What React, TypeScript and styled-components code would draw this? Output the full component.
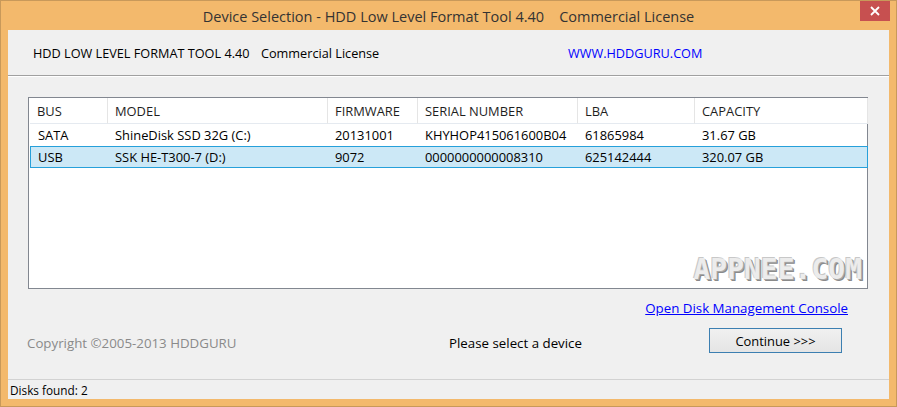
import styled, { createGlobalStyle } from "styled-components";

const GlobalStyle = createGlobalStyle`
  html, body {
    margin: 0;
    padding: 0;
    background: #f3b96c;
  }
  body {
    font-family: "Open Sans", "Noto Sans", "Liberation Sans", sans-serif;
    font-size: 12.7px;
    color: #000;
  }
`

const columns = [
  { title: "BUS", width: 78 },
  { title: "MODEL", width: 220 },
  { title: "FIRMWARE", width: 90 },
  { title: "SERIAL NUMBER", width: 160 },
  { title: "LBA", width: 117 },
  { title: "CAPACITY", width: 173 },
]

const disks = [
  ["SATA", "ShineDisk SSD 32G (C:)", "20131001", "KHYHOP415061600B04", "61865984", "31.67 GB"],
  ["USB", "SSK HE-T300-7 (D:)", "9072", "0000000000008310", "625142444", "320.07 GB"],
]

export default () => {
  return (
    <Window>
      <GlobalStyle />
      <TitleBar>
        <Caption>Device Selection - HDD Low Level Format Tool 4.40&nbsp;&nbsp;&nbsp;&nbsp;Commercial License</Caption>
        <CloseButton>
          <svg width="10" height="10" viewBox="0 0 10 10">
            <path d="M1 1 L9 9 M9 1 L1 9" stroke="#fff" strokeWidth="1.8" />
          </svg>
        </CloseButton>
      </TitleBar>
      <Client>
        <Header>
          <HeaderTitle>HDD LOW LEVEL FORMAT TOOL 4.40</HeaderTitle>
          <HeaderLicense>Commercial License</HeaderLicense>
          <SiteLink>WWW.HDDGURU.COM</SiteLink>
        </Header>
        <Body>
          <ListView>
            <Table>
              <colgroup>
                {columns.map((c) => (
                  <col key={c.title} style={{ width: c.width }} />
                ))}
              </colgroup>
              <thead>
                <tr>
                  {columns.map((c) => (
                    <HeadCell key={c.title}>{c.title}</HeadCell>
                  ))}
                </tr>
              </thead>
              <tbody>
                {disks.map((d, i) => (
                  <Row key={d[1]} selected={i === 1}>
                    {d.map((v, j) => (
                      <Cell key={j} selected={i === 1} first={j === 0} last={j === d.length - 1}>{v}</Cell>
                    ))}
                  </Row>
                ))}
              </tbody>
            </Table>
            <Watermark>APPNEE.COM</Watermark>
          </ListView>
          <LinkRow>
            <ConsoleLink href="#">Open Disk Management Console</ConsoleLink>
          </LinkRow>
          <Footer>
            <Copyright>Copyright ©2005-2013 HDDGURU</Copyright>
            <Hint>Please select a device</Hint>
            <ContinueButton>Continue &gt;&gt;&gt;</ContinueButton>
          </Footer>
        </Body>
        <StatusBar>Disks found: 2</StatusBar>
      </Client>
    </Window>
  )
}

const Window = styled.div`
  width: 897px;
  height: 407px;
  box-sizing: border-box;
  border: 1px solid #c8995a;
  background: #f3b96c;
  display: flex;
  flex-direction: column;
`

const TitleBar = styled.div`
  height: 29px;
  position: relative;
  display: flex;
  align-items: center;
  justify-content: center;
`

const Caption = styled.span`
  font-size: 14.5px;
  color: #333;
  margin-top: 1px;
`

const CloseButton = styled.div`
  position: absolute;
  top: 0;
  right: 6px;
  width: 30px;
  height: 20px;
  background: #c75050;
  display: flex;
  align-items: center;
  justify-content: center;
`

const Client = styled.div`
  flex: 1;
  margin: 0 7px 7px 7px;
  background: #f0f0f0;
  display: flex;
  flex-direction: column;
`

const Header = styled.div`
  height: 46px;
  box-sizing: border-box;
  border-bottom: 1px solid #a0a0a0;
  box-shadow: 0 1px 0 #fff;
  display: flex;
  align-items: center;
  padding-left: 25px;
`

const HeaderTitle = styled.span`
  width: 228px;
`

const HeaderLicense = styled.span`
  width: 307px;
`

const SiteLink = styled.span`
  color: #0000ff;
`

const Body = styled.div`
  flex: 1;
  display: flex;
  flex-direction: column;
  padding: 21px 0 0 20px;
  font-size: 13.3px;
`

const ListView = styled.div`
  position: relative;
  width: 840px;
  height: 192px;
  box-sizing: border-box;
  border: 1px solid #828790;
  background: #fff;
  padding: 0 1px;
  font-size: 12.9px;
`

const Table = styled.table`
  border-collapse: separate;
  border-spacing: 0;
  table-layout: fixed;
  width: 100%;
`

const HeadCell = styled.th`
  height: 25px;
  padding: 0 0 0 7px;
  text-align: left;
  font-weight: normal;
  color: #1e1e1e;
  border-right: 1px solid #e5e5e5;
  border-bottom: 1px solid #e5eaf0;
  white-space: nowrap;
`

const Row = styled.tr<{ selected?: boolean }>`
  background: ${(p) => (p.selected ? "#cce8f6" : "transparent")};
`

const Cell = styled.td<{ selected?: boolean; first?: boolean; last?: boolean }>`
  height: 20px;
  padding: 0 0 0 7px;
  white-space: nowrap;
  border-top: 1px solid ${(p) => (p.selected ? "#26a0da" : "transparent")};
  border-bottom: 1px solid ${(p) => (p.selected ? "#26a0da" : "transparent")};
  border-left: ${(p) => (p.first ? `1px solid ${p.selected ? "#26a0da" : "transparent"}` : "none")};
  border-right: ${(p) => (p.last ? `1px solid ${p.selected ? "#26a0da" : "transparent"}` : "none")};
`

const Watermark = styled.div`
  position: absolute;
  right: 5px;
  bottom: 2px;
  font-family: "DejaVu Sans Mono", "Liberation Mono", monospace;
  font-weight: bold;
  font-size: 28px;
  color: #ececec;
  text-shadow: -1px -1px 0 #c8c8c8, 1px 1px 0 #a8a8a8, 2px 2px 0 #8a8a8a;
`

const LinkRow = styled.div`
  display: flex;
  justify-content: flex-end;
  width: 820px;
  margin-top: 10px;
`

const ConsoleLink = styled.a`
  color: #0000ff;
  text-decoration: underline;
`

const Footer = styled.div`
  display: grid;
  grid-template-columns: 422px 260px 133px;
  align-items: center;
  margin-top: 11px;
  margin-left: -1px;
`

const Copyright = styled.span`
  color: #8a8a8a;
`

const Hint = styled.span``

const ContinueButton = styled.button`
  height: 25px;
  margin-bottom: 5px;
  box-sizing: border-box;
  border: 1px solid #3c7fb1;
  background: linear-gradient(#f0f0f0, #e5e5e5);
  font: inherit;
  font-size: 12.9px;
  color: #000;
  padding: 0;
`

const StatusBar = styled.div`
  height: 20px;
  box-sizing: border-box;
  border-top: 1px solid #d2d2d2;
  padding-left: 2px;
  display: flex;
  align-items: center;
  font-size: 11.8px;
`
